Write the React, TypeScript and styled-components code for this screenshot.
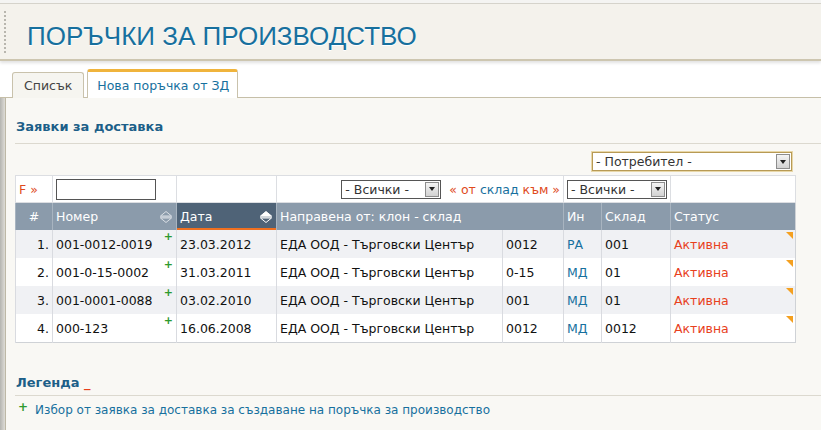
import React from "react";
import styled, { createGlobalStyle, css } from "styled-components";

const GlobalStyle = createGlobalStyle`
  html, body {
    margin: 0;
    padding: 0;
    background: #f9f8f4;
    font-family: "DejaVu Sans", Verdana, sans-serif;
    font-size: 12.5px;
  }
`;

const Page = styled.div`
  width: 821px;
  height: 430px;
  overflow: hidden;
  background: #fff;
`;

const TopStrip = styled.div`
  height: 3px;
  background: #f4f4f2;
  border-bottom: 1px solid #d6d4cc;
`;

const Header = styled.div`
  height: 55px;
  background: #f4f2ec;
  border-bottom: 2px solid #cdc6b0;
  box-shadow: 0 2px 3px rgba(0, 0, 0, 0.12);
  display: flex;
  align-items: center;
  padding-left: 4px;
`;

const Dots = styled.div`
  width: 1px;
  height: 42px;
  border-left: 2px dotted #b8b6ae;
  margin-right: 20px;
`;

const Title = styled.h1`
  margin: 10px 0 0;
  font-family: "Liberation Sans", Arial, sans-serif;
  font-weight: normal;
  font-size: 26px;
  color: #17709e;
  text-shadow: 0 1px 0 #fff;
`;

const TabBar = styled.div`
  display: flex;
  align-items: flex-end;
  gap: 3px;
  height: 36px;
  padding-left: 12px;
  border-bottom: 1px solid #c6bfa8;
`;

const Tab = styled.div<{ $active?: boolean }>`
  height: 25px;
  padding: 0 11px;
  display: flex;
  align-items: center;
  border: 1px solid #c9c2ac;
  border-bottom: none;
  border-radius: 3px 3px 0 0;
  font-size: 12.5px;
  color: #444;
  background: #f6f5f0;
  margin-bottom: -1px;
  ${(p) =>
    p.$active &&
    css`
      height: 26px;
      padding: 0 8px 0 9px;
      background: #fff;
      color: #17709e;
      border-top: 3px solid #f0b43c;
    `}
`;

const Frame = styled.div`
  display: flex;
  height: 333px;
`;

const Shade = styled.div`
  width: 5px;
  background: linear-gradient(to right, #b4b4b0, #dedcd6);
  border-right: 1px solid #bdb8a6;
`;

const Panel = styled.div`
  flex: 1;
  background: #f9f8f4;
  padding: 0 0 0 9px;
`;

const SectionTitle = styled.div`
  padding: 21px 0 9px 1px;
  border-bottom: 1px solid #dcd9cf;
  font-weight: bold;
  font-size: 13px;
  color: #1c5f88;
`;

const FilterLine = styled.div`
  display: flex;
  justify-content: flex-end;
  padding: 8px 29px 4px 0;
`;

const SelectBox = styled.div<{ $w: number; $focus?: boolean }>`
  width: ${(p) => p.$w}px;
  height: 19px;
  box-sizing: border-box;
  display: flex;
  align-items: center;
  justify-content: space-between;
  background: #fff;
  border: 1px solid ${(p) => (p.$focus ? "#b79a55" : "#555")};
  box-shadow: ${(p) => (p.$focus ? "0 0 0 1px #e8d7a8" : "none")};
  font-size: 12.5px;
  color: #333;
  padding-left: 3px;
`;

const Arrow = styled.span`
  width: 14px;
  height: 15px;
  margin-right: 1px;
  box-sizing: border-box;
  border: 1px solid #8d8d8d;
  background: linear-gradient(#f4f4f4, #d2d2d2);
  display: flex;
  align-items: center;
  justify-content: center;
  &::after {
    content: "";
    border-left: 3px solid transparent;
    border-right: 3px solid transparent;
    border-top: 4px solid #222;
  }
`;

const Table = styled.table`
  width: 780px;
  border-collapse: collapse;
  table-layout: fixed;
  border: 1px solid #cfd2d6;
  background: #fff;
`;

const FilterCell = styled.td`
  height: 26px;
  padding: 0 3px;
  border: 1px solid #dcdee2;
  white-space: nowrap;
  vertical-align: middle;
`;

const FilterInner = styled.div`
  display: flex;
  align-items: center;
  justify-content: flex-end;
  gap: 8px;
`;

const Red = styled.span`
  color: #e04a1c;
`;

const Blue = styled.span`
  color: #17709e;
`;

const TextInput = styled.input`
  width: 100px;
  height: 21px;
  box-sizing: border-box;
  border: 1px solid #555;
  margin: 0;
`;

const Th = styled.th<{ $sorted?: boolean; $align?: string }>`
  height: 27px;
  padding: 0 3px;
  font-weight: normal;
  font-size: 12.5px;
  color: #fff;
  text-align: ${(p) => p.$align || "left"};
  background: ${(p) => (p.$sorted ? "#4f6377" : "#8b9bab")};
  border-left: 1px solid #a8b4c0;
  box-shadow: ${(p) => (p.$sorted ? "inset 0 -2px 0 #f07020" : "none")};
  white-space: nowrap;
`;

const ThInner = styled.div`
  display: flex;
  align-items: center;
  justify-content: space-between;
`;

const Row = styled.tr<{ $odd: boolean }>`
  background: ${(p) => (p.$odd ? "#f0f1f4" : "#fff")};
`;

const Td = styled.td<{ $align?: string; $color?: string }>`
  position: relative;
  height: 28px;
  padding: 0 3px;
  border-left: 1px solid #d9dbe0;
  color: ${(p) => p.$color || "#111"};
  text-align: ${(p) => p.$align || "left"};
  white-space: nowrap;
  font-size: 12.5px;
`;

const Plus = styled.span`
  position: absolute;
  top: 1px;
  right: 3px;
  font-size: 11px;
  font-weight: bold;
  line-height: 1;
  color: #2e9a2e;
`;

const Corner = styled.span`
  position: absolute;
  top: 2px;
  right: 2px;
  width: 0;
  height: 0;
  border-top: 7px solid #f4a020;
  border-left: 7px solid transparent;
`;

const Legend = styled.div`
  margin-top: 32px;
  padding: 0 0 5px 1px;
  border-bottom: 1px solid #dcd9cf;
  font-weight: bold;
  font-size: 13px;
  color: #1c5f88;
`;

const Underscore = styled.span`
  color: #e8401c;
`;

const LegendItem = styled.div`
  display: flex;
  align-items: center;
  gap: 7px;
  padding: 7px 0 0 3px;
  font-size: 12px;
  color: #17709e;
`;

const GreenPlus = styled.span`
  color: #2e9a2e;
  font-weight: bold;
  font-size: 12px;
  margin-top: -7px;
`;

function SortIcon({ active }: { active?: boolean }) {
  const c = active ? "#fff" : "#d9dee4";
  return (
    <svg width="14" height="14" viewBox="0 0 14 14">
      <path d="M7 1.5 L12.5 6 H1.5 Z" fill={active ? "#fff" : "none"} stroke={c} strokeWidth="1" />
      <line x1="1" y1="7" x2="13" y2="7" stroke={c} strokeWidth="1" />
      <path d="M1.5 8 H12.5 L7 12.5 Z" fill="none" stroke={c} strokeWidth="1" />
    </svg>
  );
}

const rows = [
  { n: "1.", num: "001-0012-0019", date: "23.03.2012", code: "0012", in: "РА", wh: "001" },
  { n: "2.", num: "001-0-15-0002", date: "31.03.2011", code: "0-15", in: "МД", wh: "01" },
  { n: "3.", num: "001-0001-0088", date: "03.02.2010", code: "001", in: "МД", wh: "01" },
  { n: "4.", num: "000-123", date: "16.06.2008", code: "0012", in: "МД", wh: "0012" },
];

export default function App() {
  return (
    <Page>
      <GlobalStyle />
      <TopStrip />
      <Header>
        <Dots />
        <Title>ПОРЪЧКИ ЗА ПРОИЗВОДСТВО</Title>
      </Header>
      <TabBar>
        <Tab>Списък</Tab>
        <Tab $active>Нова поръчка от ЗД</Tab>
      </TabBar>
      <Frame>
        <Shade />
        <Panel>
          <SectionTitle>Заявки за доставка</SectionTitle>
          <FilterLine>
            <SelectBox $w={200} $focus>
              - Потребител -<Arrow />
            </SelectBox>
          </FilterLine>
          <Table>
            <colgroup>
              <col style={{ width: 37 }} />
              <col style={{ width: 124 }} />
              <col style={{ width: 100 }} />
              <col style={{ width: 226 }} />
              <col style={{ width: 61 }} />
              <col style={{ width: 38 }} />
              <col style={{ width: 69 }} />
              <col style={{ width: 125 }} />
            </colgroup>
            <tbody>
              <tr>
                <FilterCell>
                  <Red>F »</Red>
                </FilterCell>
                <FilterCell>
                  <TextInput />
                </FilterCell>
                <FilterCell />
                <FilterCell colSpan={2}>
                  <FilterInner>
                    <SelectBox $w={100}>
                      - Всички -<Arrow />
                    </SelectBox>
                    <span>
                      <Red>« от </Red>
                      <Blue>склад </Blue>
                      <Red>към »</Red>
                    </span>
                  </FilterInner>
                </FilterCell>
                <FilterCell colSpan={2}>
                  <SelectBox $w={100}>
                    - Всички -<Arrow />
                  </SelectBox>
                </FilterCell>
                <FilterCell />
              </tr>
              <tr>
                <Th $align="center">#</Th>
                <Th>
                  <ThInner>
                    Номер <SortIcon />
                  </ThInner>
                </Th>
                <Th $sorted>
                  <ThInner>
                    Дата <SortIcon active />
                  </ThInner>
                </Th>
                <Th colSpan={2}>Направена от: клон - склад</Th>
                <Th>Ин</Th>
                <Th>Склад</Th>
                <Th>Статус</Th>
              </tr>
              {rows.map((r, i) => (
                <Row key={r.n} $odd={i % 2 === 0}>
                  <Td $align="right">{r.n}</Td>
                  <Td>
                    {r.num}
                    <Plus>+</Plus>
                  </Td>
                  <Td>{r.date}</Td>
                  <Td>ЕДА ООД - Търговски Център</Td>
                  <Td>{r.code}</Td>
                  <Td $color="#17709e">{r.in}</Td>
                  <Td>{r.wh}</Td>
                  <Td $color="#e8401c">
                    Активна
                    <Corner />
                  </Td>
                </Row>
              ))}
            </tbody>
          </Table>
          <Legend>
            Легенда <Underscore>_</Underscore>
          </Legend>
          <LegendItem>
            <GreenPlus>+</GreenPlus>
            Избор от заявка за доставка за създаване на поръчка за производство
          </LegendItem>
        </Panel>
      </Frame>
    </Page>
  );
}
